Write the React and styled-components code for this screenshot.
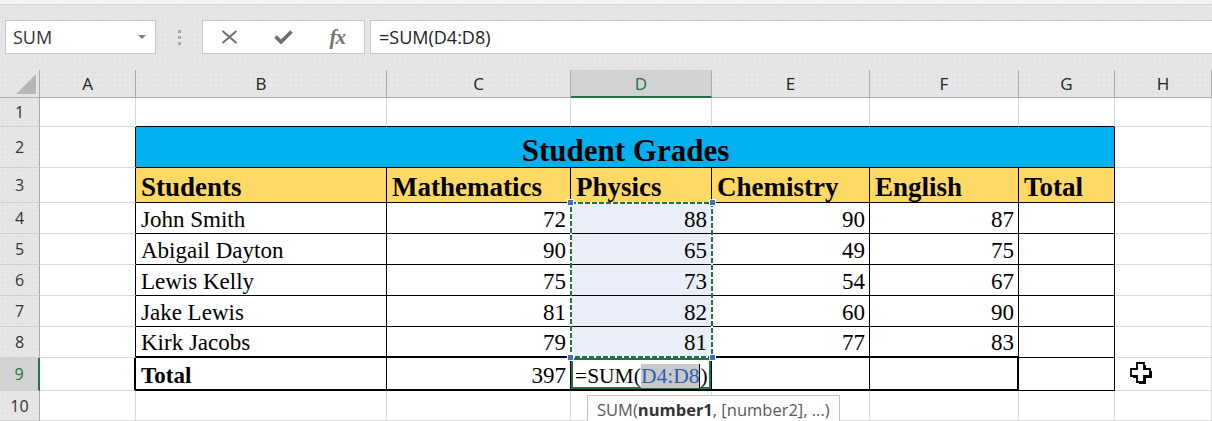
import React from 'react';
import styled, { createGlobalStyle, css } from 'styled-components';

const COLS = [40, 96, 251, 184, 141, 158, 149, 96, 97];
const ROWS = [28, 29, 41, 35, 31, 31, 31, 31, 31, 33, 30];
const GRID = '#d9d9d9';
const HEAD_LINE = '#ababab';
const GREEN = '#217346';
const SANS = '"Open Sans", "Noto Sans", sans-serif';
const SERIF = '"Liberation Serif", "Times New Roman", serif';

const GlobalStyle = createGlobalStyle`
  html, body { margin: 0; padding: 0; }
  body {
    width: 1212px;
    height: 421px;
    overflow: hidden;
    background: #fff;
    font-family: ${SANS};
  }
`;

const dotted = css`
  background-color: #e6e6e6;
  background-image: radial-gradient(circle, #d6d6d6 0.7px, transparent 0.9px);
  background-size: 5px 5px;
`;

const Page = styled.div`
  display: flex;
  flex-direction: column;
  width: 1212px;
  height: 421px;
  overflow: hidden;
`;

const TopStrip = styled.div`
  height: 4px;
  background: #f3f3f3;
  border-bottom: 1px solid #d4d4d4;
`;

const Toolbar = styled.div`
  ${dotted};
  display: flex;
  align-items: flex-start;
  height: 65px;
  box-sizing: border-box;
  padding: 15px 0 0 5px;
`;

const NameBox = styled.div`
  width: 151px;
  height: 34px;
  box-sizing: border-box;
  background: #fff;
  border: 1px solid #c6c6c6;
  display: flex;
  align-items: center;
  justify-content: space-between;
  padding: 0 9px 0 7px;
  font-size: 18px;
  color: #333;
`;

const Caret = styled.span`
  width: 0;
  height: 0;
  border-left: 4px solid transparent;
  border-right: 4px solid transparent;
  border-top: 4px solid #808080;
`;

const Grip = styled.div`
  width: 46px;
  height: 34px;
  display: flex;
  flex-direction: column;
  align-items: center;
  justify-content: center;
  gap: 3px;
`;

const GripDot = styled.span`
  width: 3px;
  height: 3px;
  background: #a8a8a8;
`;

const FnButtons = styled.div`
  width: 163px;
  height: 34px;
  box-sizing: border-box;
  background: #fff;
  border: 1px solid #c6c6c6;
  display: flex;
  align-items: center;
`;

const FnButton = styled.div`
  width: 54px;
  height: 100%;
  display: flex;
  align-items: center;
  justify-content: center;
  color: #6e6e6e;
`;

const FxText = styled.span`
  font-family: ${SERIF};
  font-style: italic;
  font-size: 21px;
  font-weight: bold;
  color: #737373;
  letter-spacing: -1px;
`;

const FormulaBox = styled.div`
  flex: 1;
  margin-left: 5px;
  height: 34px;
  box-sizing: border-box;
  background: #fff;
  border: 1px solid #c6c6c6;
  border-right: none;
  display: flex;
  align-items: center;
  padding-left: 8px;
  font-size: 18px;
  color: #222;
`;

const Sheet = styled.div`
  position: relative;
  display: grid;
  grid-template-columns: ${COLS.map((c) => `${c}px`).join(' ')};
  grid-template-rows: ${ROWS.map((r) => `${r}px`).join(' ')};
  background: #fff;
`;

const Corner = styled.div`
  ${dotted};
  box-sizing: border-box;
  border-right: 1px solid ${HEAD_LINE};
  border-bottom: 1px solid ${HEAD_LINE};
  display: flex;
  align-items: flex-end;
  justify-content: flex-end;
  padding: 0 3px 3px 0;
`;

const CornerMark = styled.span`
  width: 0;
  height: 0;
  border-left: 20px solid transparent;
  border-bottom: 20px solid #b7b7b7;
`;

const ColHead = styled.div`
  ${dotted};
  box-sizing: border-box;
  border-right: 1px solid ${HEAD_LINE};
  border-bottom: 1px solid ${HEAD_LINE};
  display: flex;
  align-items: center;
  justify-content: center;
  font-size: 17px;
  color: #222;
  ${(p) => p.$active && css`
    background: #d2d2d2;
    color: ${GREEN};
    border-bottom: 2px solid ${GREEN};
  `}
`;

const RowHead = styled.div`
  ${dotted};
  box-sizing: border-box;
  border-right: 1px solid ${HEAD_LINE};
  border-bottom: 1px solid #d0d0d0;
  display: flex;
  align-items: center;
  justify-content: center;
  font-size: 16px;
  color: #333;
  ${(p) => p.$active && css`
    background: #d2d2d2;
    color: ${GREEN};
    border-right: 2px solid ${GREEN};
  `}
`;

const Cell = styled.div`
  box-sizing: border-box;
  border-right: ${(p) => p.$right || `1px solid ${GRID}`};
  border-bottom: ${(p) => p.$bottom || `1px solid ${GRID}`};
  grid-column: ${(p) => (p.$span ? `span ${p.$span}` : 'auto')};
  background: ${(p) => p.$bg || '#fff'};
  display: flex;
  align-items: flex-end;
  justify-content: ${(p) =>
    p.$align === 'right' ? 'flex-end' : p.$align === 'center' ? 'center' : 'flex-start'};
  padding: 0 4px 0 5px;
  font-family: ${SERIF};
  font-size: ${(p) => p.$size || 23}px;
  font-weight: ${(p) => (p.$bold ? 'bold' : 'normal')};
  line-height: ${(p) => p.$lh || 1.15};
  color: #000;
  white-space: nowrap;
  overflow: visible;
`;

const ActiveCell = styled(Cell)`
  box-shadow: inset 0 0 0 2px ${GREEN};
  padding-left: 4px;
  font-size: 21.5px;
  position: relative;
  z-index: 1;
`;

const RefText = styled.span`
  color: #2d5fb3;
  background: #c9c9c9;
`;

const TextCursor = styled.span`
  display: inline-block;
  width: 1px;
  height: 24px;
  background: #000;
  vertical-align: -5px;
`;

const PointerCell = styled(Cell)`
  align-items: center;
  padding-left: 14px;
`;

const Selection = styled.div`
  position: absolute;
  pointer-events: none;
  z-index: 2;
`;

const Handle = styled.span`
  position: absolute;
  width: 5px;
  height: 5px;
  background: #3f6fc5;
  border: 1px solid #fff;
`;

const Tooltip = styled.div`
  position: absolute;
  left: 587px;
  top: 325px;
  height: 28px;
  box-sizing: border-box;
  padding: 0 9px;
  background: #fff;
  border: 1px solid #c3c3c3;
  display: flex;
  align-items: center;
  font-size: 16.5px;
  color: #595959;
  white-space: nowrap;
  z-index: 3;

  b {
    color: #333;
    font-weight: bold;
  }
`;

const students = [
  ['John Smith', 72, 88, 90, 87],
  ['Abigail Dayton', 90, 65, 49, 75],
  ['Lewis Kelly', 75, 73, 54, 67],
  ['Jake Lewis', 81, 82, 60, 90],
  ['Kirk Jacobs', 79, 81, 77, 83],
];

const BLACK = '1px solid #000';
const THICK = '2px solid #000';
const SELECT_BG = '#e9eef8';

const left = (i) => COLS.slice(0, i).reduce((a, b) => a + b, 0);
const top = (i) => ROWS.slice(0, i).reduce((a, b) => a + b, 0);

function CloseIcon() {
  return (
    <svg width="17" height="14" viewBox="0 0 17 14">
      <path d="M1.5 1 L15.5 13 M15.5 1 L1.5 13" stroke="#6e6e6e" strokeWidth="2" fill="none" />
    </svg>
  );
}

function CheckIcon() {
  return (
    <svg width="19" height="14" viewBox="0 0 19 14">
      <path d="M1.5 6.5 L7 12 L17.5 1.5" stroke="#6e6e6e" strokeWidth="3.6" fill="none" />
    </svg>
  );
}

function PlusCursor() {
  return (
    <svg width="26" height="24" viewBox="0 0 26 24">
      <path d="M10 3 h7 v6 h6 v7 h-6 v6 h-7 v-6 h-6 v-7 h6 z" fill="#000" />
      <path d="M8 1 h7 v6 h6 v7 h-6 v6 h-7 v-6 h-6 v-7 h6 z" fill="#fff" stroke="#000" strokeWidth="1.8" />
    </svg>
  );
}

function Marquee({ width, height }) {
  return (
    <svg width={width} height={height} style={{ display: 'block' }}>
      <rect x="1" y="1" width={width - 2} height={height - 2} fill="none" stroke="#fff" strokeWidth="2" />
      <rect x="1" y="1" width={width - 2} height={height - 2} fill="none" stroke={GREEN} strokeWidth="2" strokeDasharray="5 2" />
    </svg>
  );
}

export default function App() {
  const selLeft = left(4) - 1;
  const selTop = top(4) - 1;
  const selW = COLS[4] + 2;
  const selH = ROWS.slice(4, 9).reduce((a, b) => a + b, 0) + 1;

  return (
    <Page>
      <GlobalStyle />
      <TopStrip />
      <Toolbar>
        <NameBox>
          SUM
          <Caret />
        </NameBox>
        <Grip>
          <GripDot />
          <GripDot />
          <GripDot />
        </Grip>
        <FnButtons>
          <FnButton><CloseIcon /></FnButton>
          <FnButton><CheckIcon /></FnButton>
          <FnButton><FxText>fx</FxText></FnButton>
        </FnButtons>
        <FormulaBox>=SUM(D4:D8)</FormulaBox>
      </Toolbar>

      <Sheet>
        <Corner><CornerMark /></Corner>
        {['A', 'B', 'C', 'D', 'E', 'F', 'G', 'H'].map((c) => (
          <ColHead key={c} $active={c === 'D'}>{c}</ColHead>
        ))}

        <RowHead>1</RowHead>
        <Cell />
        {[0, 1, 2, 3, 4, 5].map((i) => <Cell key={i} $bottom={BLACK} />)}
        <Cell />

        <RowHead>2</RowHead>
        <Cell $right={BLACK} />
        <Cell $span={6} $bg="#00b0f0" $right={BLACK} $bottom={BLACK} $align="center" $bold $size={31} $lh={1.02}>
          Student Grades
        </Cell>
        <Cell />

        <RowHead>3</RowHead>
        <Cell $right={BLACK} />
        {['Students', 'Mathematics', 'Physics', 'Chemistry', 'English', 'Total'].map((h) => (
          <Cell key={h} $bg="#ffd966" $right={BLACK} $bottom={BLACK} $bold $size={27} $lh={1.08}>{h}</Cell>
        ))}
        <Cell />

        {students.map((row, r) => {
          const last = r === students.length - 1;
          const edge = last ? THICK : BLACK;
          return (
            <React.Fragment key={row[0]}>
              <RowHead>{r + 4}</RowHead>
              <Cell $right={BLACK} />
              <Cell $right={BLACK} $bottom={edge}>{row[0]}</Cell>
              {row.slice(1).map((v, i) => (
                <Cell
                  key={i}
                  $align="right"
                  $right={BLACK}
                  $bottom={edge}
                  $bg={i === 1 ? SELECT_BG : undefined}
                >
                  {v}
                </Cell>
              ))}
              <Cell $right={BLACK} $bottom={BLACK} />
              <Cell />
            </React.Fragment>
          );
        })}

        <RowHead $active>9</RowHead>
        <Cell $right={THICK} />
        <Cell $right={BLACK} $bottom={THICK} $bold>Total</Cell>
        <Cell $right={BLACK} $bottom={THICK} $align="right">397</Cell>
        <ActiveCell $right={BLACK} $bottom={THICK}>
          <span>=SUM(<RefText>D4:D8</RefText><TextCursor />)</span>
        </ActiveCell>
        <Cell $right={BLACK} $bottom={THICK} />
        <Cell $right={THICK} $bottom={THICK} />
        <Cell $right={BLACK} $bottom={BLACK} />
        <PointerCell><PlusCursor /></PointerCell>

        <RowHead>10</RowHead>
        {COLS.slice(1).map((_, i) => <Cell key={i} />)}

        <Selection style={{ left: selLeft, top: selTop, width: selW, height: selH }}>
          <Marquee width={selW} height={selH} />
          <Handle style={{ left: -3, top: -3 }} />
          <Handle style={{ right: -3, top: -3 }} />
          <Handle style={{ left: -3, bottom: -3 }} />
          <Handle style={{ right: -3, bottom: -3 }} />
        </Selection>

        <Tooltip>
          SUM(<b>number1</b>, [number2], ...)
        </Tooltip>
      </Sheet>
    </Page>
  );
}
